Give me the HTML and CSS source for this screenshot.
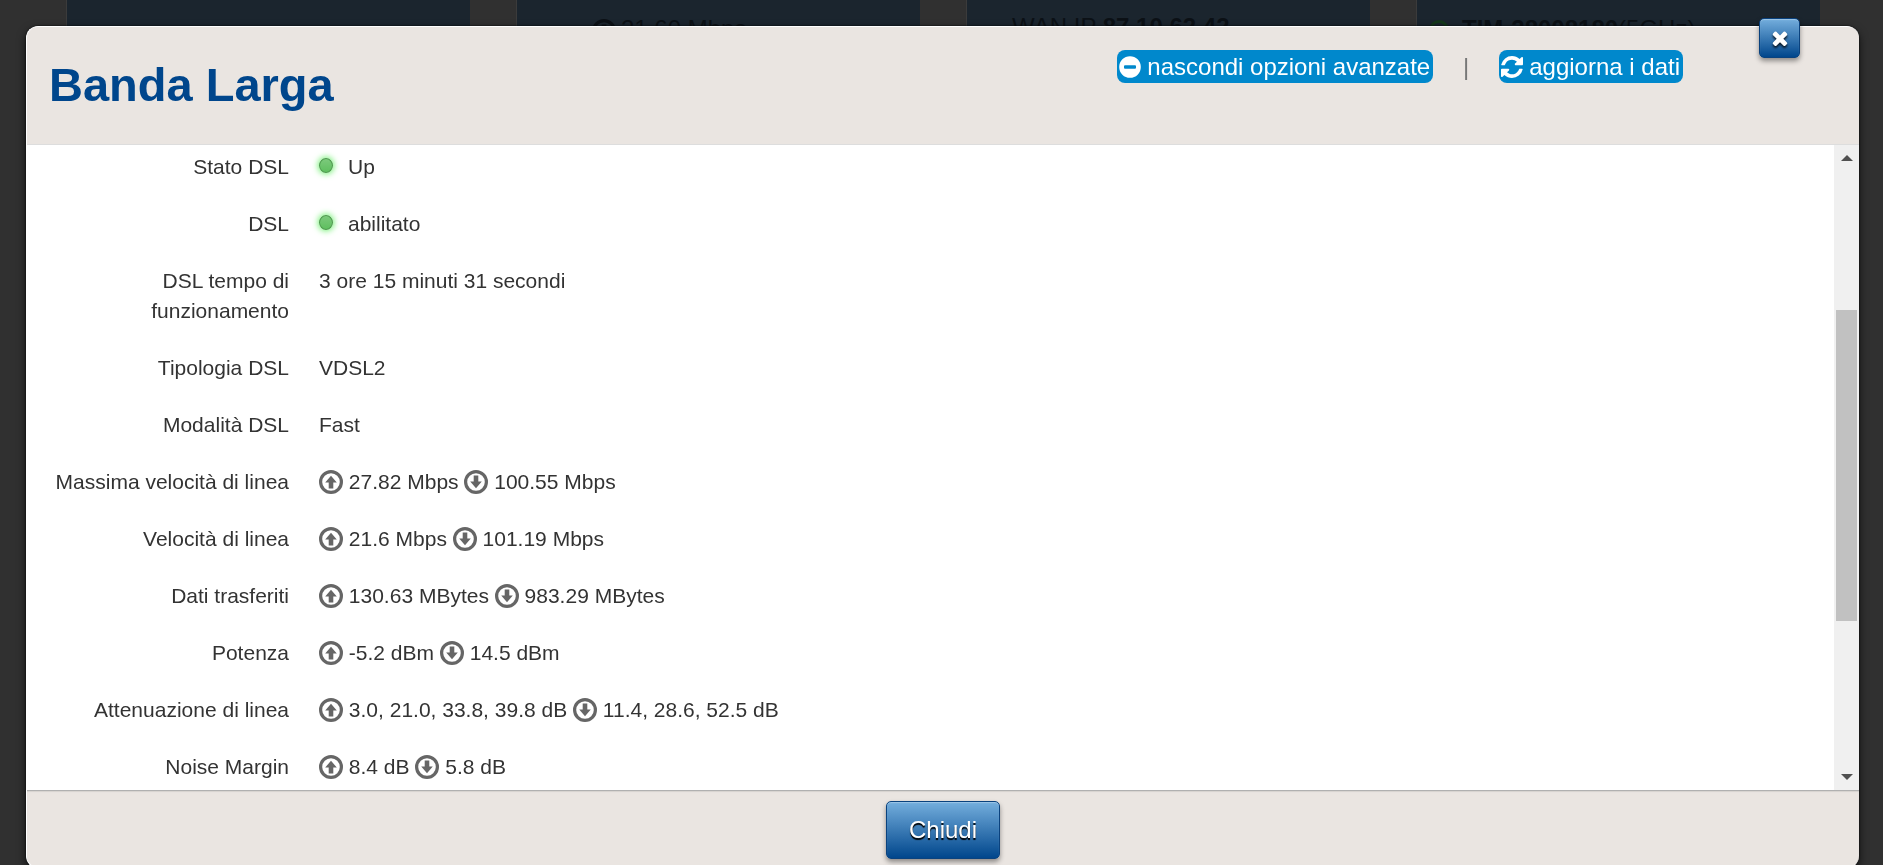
FILE: index.html
```html
<!DOCTYPE html>
<html lang="it">
<head>
<meta charset="utf-8">
<title>Banda Larga</title>
<link rel="stylesheet" href="styles.css">
</head>
<body>
<svg class="sprite" aria-hidden="true">
  <symbol id="up" viewBox="0 0 24 24"><circle cx="12" cy="12" r="10.400" fill="none" stroke="currentColor" stroke-width="3.200"/><path fill="currentColor" d="M12 5.800l5.800 6.700h-3.500v5.900H9.700v-5.900H6.200z"/></symbol>
  <symbol id="down" viewBox="0 0 24 24"><circle cx="12" cy="12" r="10.400" fill="none" stroke="currentColor" stroke-width="3.200"/><path fill="currentColor" d="M12 18.200l5.800-6.700h-3.500V5.600H9.700v5.900H6.200z"/></symbol>
</svg>

<main class="cards" aria-hidden="true">
  <section class="card"></section>
  <section class="card card-speed"><svg class="card-icon"><use href="#down"/></svg><span>21.60 Mbps</span></section>
  <section class="card card-wan"><span>WAN IP <b>87.10.62.42</b></span></section>
  <section class="card card-wifi"><i class="ring"></i><span><b>TIM-28008180</b>(5GHz)</span></section>
</main>

<div class="modal" role="dialog" aria-labelledby="title">
  <button class="btn close" type="button" aria-label="Chiudi finestra">
    <svg viewBox="0 0 1792 1792"><path fill="currentColor" d="M1490 1322q0 40-28 68l-136 136q-28 28-68 28t-68-28l-294-294-294 294q-28 28-68 28t-68-28l-136-136q-28-28-28-68t28-68l294-294-294-294q-28-28-28-68t28-68l136-136q28-28 68-28t68 28l294 294 294-294q28-28 68-28t68 28l136 136q28 28 28 68t-28 68l-294 294 294 294q28 28 28 68z"/></svg>
  </button>
  <header class="modal-header">
    <h1 id="title">Banda Larga</h1>
    <nav class="actions">
      <a class="pill" href="#avanzate"><svg viewBox="0 0 22 22"><path fill="currentColor" fill-rule="evenodd" d="M11 .2a10.800 10.800 0 1 1 0 21.600a10.800 10.800 0 1 1 0-21.600zM6 9.200q-1 0-1 1v1.600q0 1 1 1h10q1 0 1-1v-1.600q0-1-1-1z"/></svg>nascondi opzioni avanzate</a>
      <span class="divider">|</span>
      <a class="pill" href="#aggiorna"><svg viewBox="0 0 1536 1536"><path fill="currentColor" d="M1511 928q0 5-1 7-64 268-268 434.500t-478 166.500q-146 0-282.500-55t-243.500-157l-129 129q-19 19-45 19t-45-19-19-45v-448q0-26 19-45t45-19h448q26 0 45 19t19 45-19 45l-137 137q71 66 161 102t187 36q134 0 250-65t186-179q11-17 53-117 8-23 30-23h192q13 0 22.500 9.500t9.500 22.500zm25-800v448q0 26-19 45t-45 19h-448q-26 0-45-19t-19-45 19-45l138-138q-148-137-349-137-134 0-250 65t-186 179q-11 17-53 117-8 23-30 23h-199q-13 0-22.500-9.500t-9.500-22.500v-7q65-268 270-434.500t480-166.500q146 0 284 55.500t245 156.500l130-129q19-19 45-19t45 19 19 45z"/></svg>aggiorna i dati</a>
    </nav>
  </header>

  <div class="modal-body">
    <dl class="fields">
      <dt>Stato DSL</dt><dd><i class="led"></i>Up</dd>
      <dt>DSL</dt><dd><i class="led"></i>abilitato</dd>
      <dt>DSL tempo di funzionamento</dt><dd>3 ore 15 minuti 31 secondi</dd>
      <dt>Tipologia DSL</dt><dd>VDSL2</dd>
      <dt>Modalità DSL</dt><dd>Fast</dd>
      <dt>Massima velocità di linea</dt><dd><svg class="arrow"><use href="#up"/></svg> 27.82 Mbps <svg class="arrow"><use href="#down"/></svg> 100.55 Mbps</dd>
      <dt>Velocità di linea</dt><dd><svg class="arrow"><use href="#up"/></svg> 21.6 Mbps <svg class="arrow"><use href="#down"/></svg> 101.19 Mbps</dd>
      <dt>Dati trasferiti</dt><dd><svg class="arrow"><use href="#up"/></svg> 130.63 MBytes <svg class="arrow"><use href="#down"/></svg> 983.29 MBytes</dd>
      <dt>Potenza</dt><dd><svg class="arrow"><use href="#up"/></svg> -5.2 dBm <svg class="arrow"><use href="#down"/></svg> 14.5 dBm</dd>
      <dt>Attenuazione di linea</dt><dd><svg class="arrow"><use href="#up"/></svg> 3.0, 21.0, 33.8, 39.8 dB <svg class="arrow"><use href="#down"/></svg> 11.4, 28.6, 52.5 dB</dd>
      <dt>Noise Margin</dt><dd><svg class="arrow"><use href="#up"/></svg> 8.4 dB <svg class="arrow"><use href="#down"/></svg> 5.8 dB</dd>
    </dl>
    <div class="scrollbar" aria-hidden="true">
      <svg class="tick" viewBox="0 0 12 6"><path d="M0 6L6 0l6 6z"/></svg>
      <div class="track"><div class="thumb"></div></div>
      <svg class="tick" viewBox="0 0 12 6"><path d="M0 0h12L6 6z"/></svg>
    </div>
  </div>

  <footer class="modal-footer">
    <button class="btn submit" type="button">Chiudi</button>
  </footer>
</div>
</body>
</html>
```
FILE: styles.css
```css
* {
  box-sizing: border-box;
}

html,
body {
  height: 100%;
}

body {
  margin: 0;
  overflow: hidden;
  background: #303030;
  color: #333;
  font: 21px/30px "Liberation Sans", Arial, sans-serif;
}

.sprite {
  position: absolute;
  width: 0;
  height: 0;
}

.cards {
  display: grid;
  grid-template-columns: repeat(4, 1fr);
  gap: 46px;
  padding: 0 63px 0 66px;
}

.card {
  display: flex;
  gap: 5px;
  height: 120px;
  padding-top: 14px;
  border-left: 1px solid #3b3b3b;
  background: #1b252e;
  color: #0c1116;
  font-size: 24px;
}

.card-speed {
  padding-left: 75px;
}

.card-wan {
  padding-top: 12px;
  padding-left: 45px;
}

.card-wifi {
  padding-left: 12px;
}

.card-icon {
  width: 24px;
  height: 24px;
  margin-top: 5px;
}

.ring {
  width: 20px;
  height: 20px;
  margin: 6px 8px 0 0;
  border: 3px solid #14381b;
  border-radius: 50%;
}

.modal {
  position: fixed;
  top: 26px;
  right: 24px;
  bottom: -3px;
  left: 26px;
  display: flex;
  flex-direction: column;
  border: 1px solid #fff;
  border-right: 0;
  border-radius: 12px;
  background: #eae5e1;
  box-shadow: 0 4px 10px rgba(0, 0, 0, 0.7), 0 0 2px #000;
}

.modal-header {
  display: flex;
  justify-content: space-between;
  align-items: flex-start;
  padding: 23px 176px 29px 22px;
  border-bottom: 1px solid #ddd;
}

h1 {
  margin: 5px 0 0;
  color: #00468c;
  font-size: 47px;
  line-height: 60px;
}

.actions {
  display: flex;
  font-size: 24px;
  line-height: 33px;
}

.pill {
  display: flex;
  align-items: center;
  gap: 6px;
  padding: 0 3px 0 2px;
  border-radius: 8px;
  background: #08c;
  color: #fff;
  text-decoration: none;
}

.pill svg {
  width: 22px;
  height: 22px;
}

.divider {
  width: 66px;
  color: #777;
  text-align: center;
}

.modal-body {
  display: flex;
  flex: 1;
  min-height: 0;
  background: #fff;
}

.fields {
  display: grid;
  flex: 1;
  grid-template-columns: 240px 1fr;
  gap: 27px 30px;
  align-content: start;
  margin: 0;
  padding: 7px 22px;
  overflow: hidden;
}

dt {
  text-align: right;
}

dd {
  margin: 0;
}

.led {
  display: inline-block;
  width: 14px;
  height: 15px;
  margin-right: 15px;
  border: 1px solid #4a9a4a;
  border-radius: 50%;
  background: linear-gradient(#7cc97c, #5fbf5f);
  box-shadow: 0 0 6px 1px #6cf06c;
  vertical-align: 1px;
}

.arrow {
  width: 24px;
  height: 24px;
  color: #666;
  vertical-align: -5px;
}

.scrollbar {
  display: flex;
  flex-direction: column;
  align-items: center;
  width: 25px;
  padding: 10px 0;
  background: #f0f0f0;
}

.tick {
  width: 12px;
  height: 6px;
  fill: #505050;
}

.track {
  display: flex;
  flex: 1;
  flex-direction: column;
  width: 21px;
  padding-top: 149px;
}

.thumb {
  height: 67%;
  background: #c1c1c1;
}

.modal-footer {
  padding: 10px 0 8px;
  border-top: 1px solid #b0b0b0;
  border-radius: 0 0 12px 12px;
  text-align: center;
  box-shadow: inset 0 1px 1px #d6d2cf;
}

.btn {
  border: 1px solid #0a427e;
  border-radius: 5px;
  background: linear-gradient(#74aedd, #00468c);
  box-shadow: inset 0 1px 1px rgba(255, 255, 255, 0.3), 0 3px 5px rgba(0, 0, 0, 0.4);
  color: #fff;
  font: inherit;
}

.submit {
  height: 58px;
  padding: 0 22px;
  font-size: 24px;
  text-shadow: 0 2px 1px #000;
  vertical-align: top;
}

.close {
  position: absolute;
  top: -9px;
  right: 59px;
  display: flex;
  align-items: center;
  justify-content: center;
  width: 41px;
  height: 40px;
  padding: 0;
}

.close svg {
  width: 22px;
  height: 22px;
  filter: drop-shadow(0 2px 1px rgba(0, 0, 0, 0.8));
}
```
